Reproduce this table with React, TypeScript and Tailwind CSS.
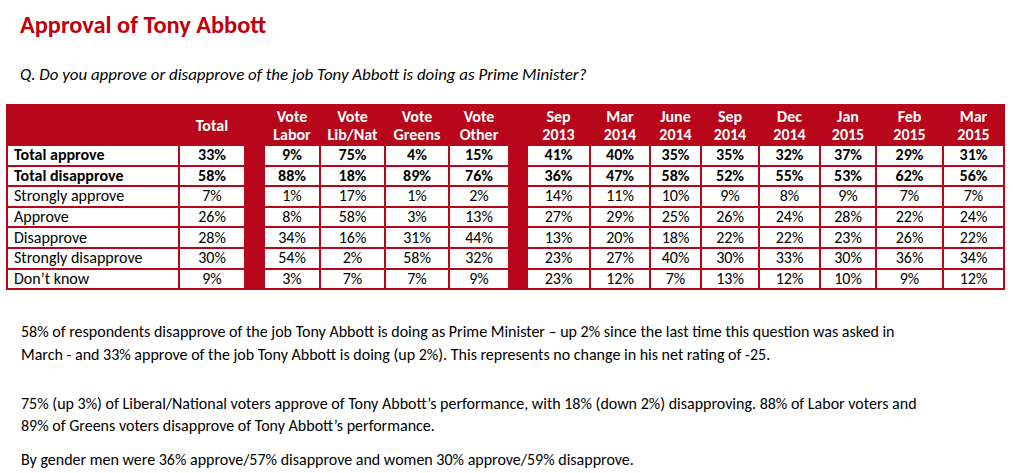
import React from "react";

const F = { fontFamily: "Carlito, Calibri, Lato, 'Liberation Sans', sans-serif" };

type Row = { label: string; bold?: boolean; v: string[] };

const rows: Row[] = [
  { label: "Total approve", bold: true, v: ["33%", "9%", "75%", "4%", "15%", "41%", "40%", "35%", "35%", "32%", "37%", "29%", "31%"] },
  { label: "Total disapprove", bold: true, v: ["58%", "88%", "18%", "89%", "76%", "36%", "47%", "58%", "52%", "55%", "53%", "62%", "56%"] },
  { label: "Strongly approve", v: ["7%", "1%", "17%", "1%", "2%", "14%", "11%", "10%", "9%", "8%", "9%", "7%", "7%"] },
  { label: "Approve", v: ["26%", "8%", "58%", "3%", "13%", "27%", "29%", "25%", "26%", "24%", "28%", "22%", "24%"] },
  { label: "Disapprove", v: ["28%", "34%", "16%", "31%", "44%", "13%", "20%", "18%", "22%", "22%", "23%", "26%", "22%"] },
  { label: "Strongly disapprove", v: ["30%", "54%", "2%", "58%", "32%", "23%", "27%", "40%", "30%", "33%", "30%", "36%", "34%"] },
  { label: "Don’t know", v: ["9%", "3%", "7%", "7%", "9%", "23%", "12%", "7%", "13%", "12%", "10%", "9%", "12%"] },
];

const heads: [string, string][] = [
  ["Vote", "Labor"],
  ["Vote", "Lib/Nat"],
  ["Vote", "Greens"],
  ["Vote", "Other"],
  ["Sep", "2013"],
  ["Mar", "2014"],
  ["June", "2014"],
  ["Sep", "2014"],
  ["Dec", "2014"],
  ["Jan", "2015"],
  ["Feb", "2015"],
  ["Mar", "2015"],
];

function Head({ a, b }: { a: string; b: string }) {
  return (
    <div className="flex flex-col items-center justify-end text-white font-bold text-[16px] leading-[18px]">
      <span>{a}</span>
      <span>{b}</span>
    </div>
  );
}

function Cell({ t, bold }: { t: string; bold?: boolean }) {
  return (
    <div className={`bg-white flex items-center justify-center text-[16px] leading-none text-black ${bold ? "font-bold" : ""}`}>
      {t}
    </div>
  );
}

export default function App() {
  return (
    <div className="w-[1013px] h-[473px] bg-white overflow-hidden text-black" style={F}>
      <h1 className="pl-[20px] pt-[10px] text-[24.4px] leading-[30px] font-bold text-[#c0000b]">Approval of Tony Abbott</h1>
      <p className="pl-[20px] mt-[25px] text-[16.9px] leading-[20px] italic">
        Q. Do you approve or disapprove of the job Tony Abbott is doing as Prime Minister?
      </p>
      <div className="ml-[6px] mt-[19px] w-[999px] bg-[#b8061a] px-[2px] pb-[2px]">
        <div className="grid grid-cols-[170px_64px_17px_54px_63px_62px_58px_16px_61px_58px_49px_56px_59px_54px_65px_59px] grid-rows-[40px_repeat(7,18.6px)] gap-[2px]">
          <div />
          <div className="flex items-center justify-center pt-[3px] text-white font-bold text-[16px] leading-[18px]">Total</div>
          <div />
          {heads.slice(0, 4).map((h, i) => (
            <Head key={"a" + i} a={h[0]} b={h[1]} />
          ))}
          <div />
          {heads.slice(4).map((h, i) => (
            <Head key={"b" + i} a={h[0]} b={h[1]} />
          ))}
          {rows.map((r) => (
            <React.Fragment key={r.label}>
              <div className={`bg-white flex items-center pl-[6px] text-[16px] leading-none ${r.bold ? "font-bold" : ""}`}>{r.label}</div>
              <Cell t={r.v[0]} bold={r.bold} />
              <div />
              {r.v.slice(1, 5).map((t, i) => (
                <Cell key={"v" + i} t={t} bold={r.bold} />
              ))}
              <div />
              {r.v.slice(5).map((t, i) => (
                <Cell key={"d" + i} t={t} bold={r.bold} />
              ))}
            </React.Fragment>
          ))}
        </div>
      </div>
      <div className="pl-[21px] mt-[31px] text-[16px] leading-[22.5px]">
        <p>
          58% of respondents disapprove of the job Tony Abbott is doing as Prime Minister – up 2% since the last time this question was asked in
          <br />
          March - and 33% approve of the job Tony Abbott is doing (up 2%). This represents no change in his net rating of -25.
        </p>
        <p className="mt-[26.5px]">
          75% (up 3%) of Liberal/National voters approve of Tony Abbott’s performance, with 18% (down 2%) disapproving. 88% of Labor voters and
          <br />
          89% of Greens voters disapprove of Tony Abbott’s performance.
        </p>
        <p className="mt-[11px]">By gender men were 36% approve/57% disapprove and women 30% approve/59% disapprove.</p>
      </div>
    </div>
  );
}
